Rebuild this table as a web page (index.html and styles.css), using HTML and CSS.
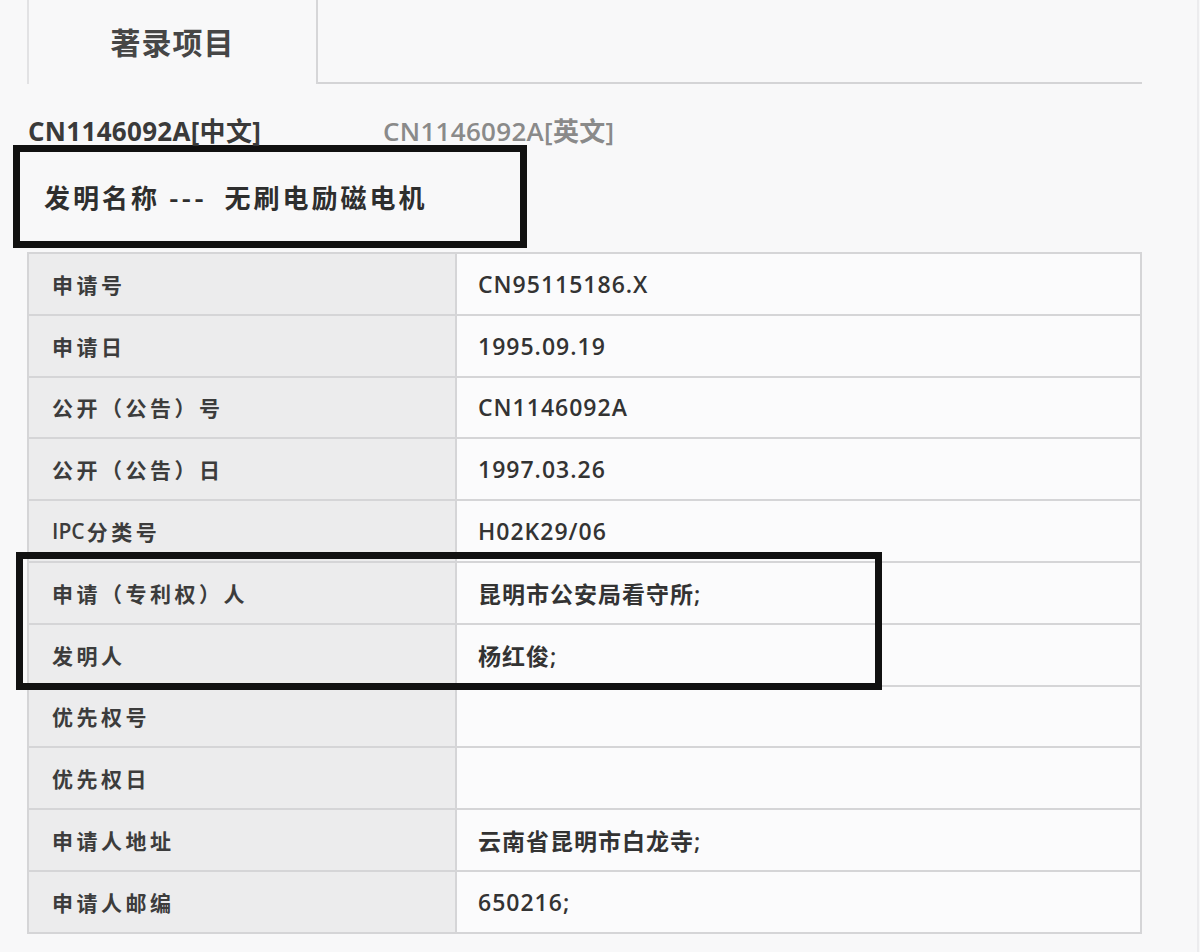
FILE: index.html
```html
<!DOCTYPE html>
<html lang="zh-CN">
<head>
<meta charset="utf-8">
<title>著录项目</title>
<link rel="stylesheet" href="styles.css">
</head>
<body>
<div class="page">
  <div class="tabbar">
    <div class="tab-gap"></div>
    <div class="tab active">著录项目</div>
    <div class="tab-rest"></div>
  </div>

  <div class="versions">
    <span class="ver current">CN1146092A[中文]</span>
    <span class="ver other">CN1146092A[英文]</span>
  </div>

  <div class="title-box">发明名称 --- &nbsp;无刷电励磁电机</div>

  <div class="table-wrap">
    <div class="grid">
      <div class="lbl">申请号</div><div class="val">CN95115186.X</div>
      <div class="lbl">申请日</div><div class="val">1995.09.19</div>
      <div class="lbl">公开（公告）号</div><div class="val">CN1146092A</div>
      <div class="lbl">公开（公告）日</div><div class="val">1997.03.26</div>
      <div class="lbl"><span class="latin">IPC</span>分类号</div><div class="val">H02K29/06</div>
      <div class="lbl">申请（专利权）人</div><div class="val">昆明市公安局看守所;</div>
      <div class="lbl">发明人</div><div class="val">杨红俊;</div>
      <div class="lbl">优先权号</div><div class="val"></div>
      <div class="lbl">优先权日</div><div class="val"></div>
      <div class="lbl">申请人地址</div><div class="val">云南省昆明市白龙寺;</div>
      <div class="lbl">申请人邮编</div><div class="val">650216;</div>
    </div>
    <div class="highlight"></div>
  </div>
</div>
</body>
</html>
```

FILE: styles.css
```css
* { box-sizing: border-box; }

html, body {
  margin: 0;
  padding: 0;
  background: #f8f8f9;
}

body {
  font-family: "Open Sans", "Noto Sans CJK SC", sans-serif;
  color: #333;
}

.page {
  width: 1199px;
  height: 952px;
  border-right: 2px solid #ececee;
  overflow: hidden;
}

/* tabs */
.tabbar {
  display: flex;
  height: 84px;
}
.tab-gap { width: 27px; }
.tab {
  width: 291px;
  border-left: 2px solid #e2e2e4;
  border-right: 2px solid #d6d6d8;
  display: flex;
  align-items: center;
  justify-content: center;
  font-family: "Noto Sans CJK SC", sans-serif;
  font-size: 30px;
  font-weight: 700;
  color: #464646;
  letter-spacing: 1px;
  padding-bottom: 2px;
}
.tab-rest {
  width: 824px;
  border-bottom: 2px solid #d4d4d6;
}

/* version links */
.versions {
  display: flex;
  margin-top: 31px;
  height: 30px;
  align-items: center;
}
.ver {
  font-size: 26px;
  letter-spacing: 0.3px;
  white-space: nowrap;
}
.ver.current {
  margin-left: 28px;
  width: 355px;
  font-weight: 700;
  color: #3a3a3a;
}
.ver.other {
  color: #8a8a8a;
  font-weight: 600;
}

/* invention title box */
.title-box {
  margin-left: 13px;
  width: 514px;
  height: 103px;
  border: 7px solid #111;
  display: flex;
  align-items: center;
  padding-left: 24px;
  font-family: "Noto Sans CJK SC", sans-serif;
  font-size: 26px;
  font-weight: 700;
  letter-spacing: 3px;
  color: #2e2e2e;
  white-space: pre;
}

/* data table */
.table-wrap {
  position: relative;
  margin-top: 4px;
  margin-left: 27px;
  width: 1115px;
}
.grid {
  display: grid;
  grid-template-columns: 426px 1fr;
  grid-auto-rows: 59.8px;
  gap: 2px;
  padding: 2px;
  background: #d5d5d7;
}
.lbl, .val {
  display: flex;
  align-items: center;
  white-space: nowrap;
}
.lbl {
  background: #ececed;
  padding-left: 23px;
  font-size: 21px;
  letter-spacing: 3.5px;
  font-weight: 700;
  color: #3c3c3c;
}
.lbl .latin {
  letter-spacing: 0;
  font-weight: 600;
  margin-right: 2px;
}
.val {
  background: #fbfbfc;
  padding-left: 21px;
  font-weight: 600;
  color: #333;
  font-size: 23px;
  letter-spacing: 1px;
}

/* annotation rectangle over the applicant / inventor rows */
.highlight {
  position: absolute;
  left: -11px;
  top: 300px;
  width: 866px;
  height: 138px;
  border: 7px solid #111;
  pointer-events: none;
}
```
